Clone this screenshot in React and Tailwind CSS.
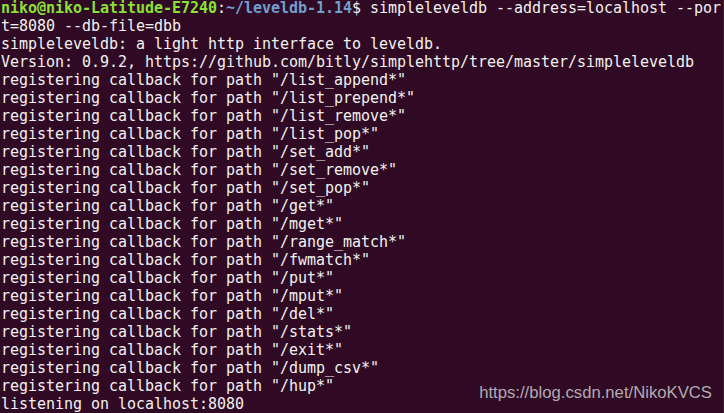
import React from "react";

const paths = [
  "/list_append*",
  "/list_prepend*",
  "/list_remove*",
  "/list_pop*",
  "/set_add*",
  "/set_remove*",
  "/set_pop*",
  "/get*",
  "/mget*",
  "/range_match*",
  "/fwmatch*",
  "/put*",
  "/mput*",
  "/del*",
  "/stats*",
  "/exit*",
  "/dump_csv*",
  "/hup*",
];

export default function App() {
  return (
    <div className="relative w-[724px] h-[413px] overflow-hidden bg-[#300a24] border-r border-[#4a1a2c]">
      <div
        className="-mt-px pl-px text-[15px] leading-[18px] tracking-[-0.03px] text-[#f2f2f0] whitespace-pre"
        style={{ fontFamily: '"DejaVu Sans Mono", monospace' }}
      >
        <div>
          <span className="font-bold text-[#8ae234]">niko@niko-Latitude-E7240</span>
          <span>:</span>
          <span className="font-bold text-[#729fcf]">~/leveldb-1.14</span>
          <span>$ simpleleveldb --address=localhost --por</span>
        </div>
        <div>t=8080 --db-file=dbb</div>
        <div>simpleleveldb: a light http interface to leveldb.</div>
        <div>Version: 0.9.2, https://github.com/bitly/simplehttp/tree/master/simpleleveldb</div>
        {paths.map((p) => (
          <div key={p}>{`registering callback for path "${p}"`}</div>
        ))}
        <div>listening on localhost:8080</div>
      </div>
      <div
        className="absolute right-[11px] top-[383px] text-[16.7px] leading-[20px] text-[#b3a9b0]"
        style={{ fontFamily: '"Liberation Sans", Arial, sans-serif' }}
      >
        https://blog.csdn.net/NikoKVCS
      </div>
    </div>
  );
}
